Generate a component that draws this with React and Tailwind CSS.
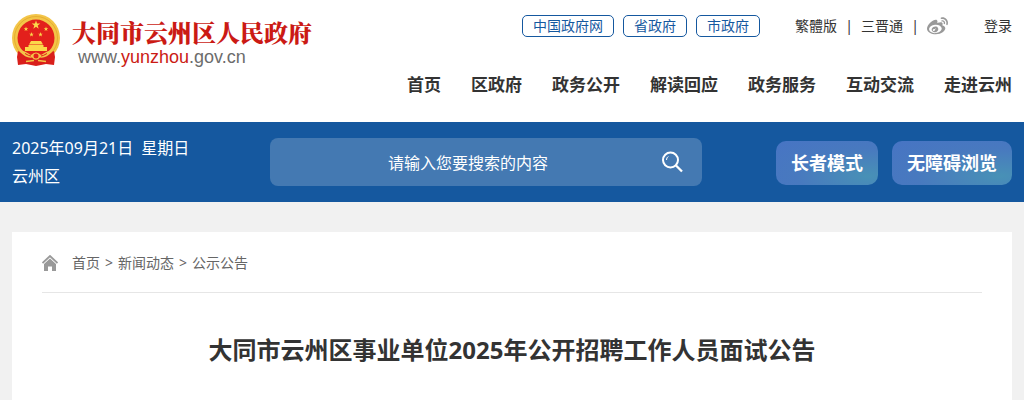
import React from "react";
import { FaWeibo } from "react-icons/fa";

const govLinks = ["中国政府网", "省政府", "市政府"];
const navItems = ["首页", "区政府", "政务公开", "解读回应", "政务服务", "互动交流", "走进云州"];
const crumbs = ["首页", "新闻动态", "公示公告"];

const STAR = "M0 -1L.24 -.32L.95 -.31L.38 .12L.59 .81L0 .4L-.59 .81L-.38 .12L-.95 -.31L-.24 -.32Z";

function Emblem() {
    return (
        <svg viewBox="0 0 48 52" className="w-12 h-[52px] shrink-0" aria-hidden="true">
            <circle cx="24" cy="24" r="24" fill="#f3c548" />
            <circle cx="24" cy="24" r="21.500" fill="none" stroke="#e5ae31" strokeWidth="1" />
            <circle cx="24" cy="24" r="18.500" fill="#e3201c" />
            <g fill="#fbd84a">
                <path d={STAR} transform="translate(24 11) scale(4.500)" />
                <path d={STAR} transform="translate(14 15) scale(2.400)" />
                <path d={STAR} transform="translate(34 15) scale(2.400)" />
                <path d={STAR} transform="translate(19.500 20.500) scale(2.400)" />
                <path d={STAR} transform="translate(28.500 20.500) scale(2.400)" />
                <path d="M19 27h10l2 3.500H17zM16.500 31h15v2h-15zM13 33h22v4H13z" />
            </g>
            <path d="M6 37L5 43L6 51L14 50L24 52L34 50L42 51L43 43L42 37Q33 42 24 42Q15 42 6 37Z" fill="#d91f1b" />
            <path d="M9 36Q15 38 19 41Q24 36 29 41Q33 38 39 36L40 38Q34 44.500 28 43.500Q24 48 20 43.500Q14 44.500 8 38Z" fill="#f3c548" />
            <path d="M13 39.500Q17 42 19 42M35 39.500Q31 42 29 42" stroke="#e3201c" strokeWidth="1" fill="none" />
            <circle cx="24" cy="42" r="2.500" fill="#e3201c" />
            <path d="M14 47.500L22 46.500M34 47.500L26 46.500" stroke="#f3c548" strokeWidth="1.500" fill="none" />
        </svg>
    );
}

function Logo() {
    return (
        <a href="#" className="flex gap-3 pt-[14px]">
            <Emblem />
            <div>
                <p className="text-[24px] leading-9 font-black text-[#cb1a14] whitespace-nowrap font-['Noto_Serif_CJK_SC','Noto_Sans_CJK_SC',serif]">大同市云州区人民政府</p>
                <p className="-mt-[5px] pl-[6px] text-[18px] leading-6 text-[#6c6c6c] font-['Liberation_Sans',sans-serif]">
                    www.<span className="text-[#cb1a14]">yunzhou</span>.gov.cn
                </p>
            </div>
        </a>
    );
}

function Header() {
    return (
        <header className="flex justify-between px-3 bg-white">
            <Logo />
            <div className="flex flex-col items-end pt-[15px]">
                <div className="flex items-center h-[22px] text-sm whitespace-nowrap">
                    <div className="flex gap-[9px] mr-[35px]">
                        {govLinks.map((name) => (
                            <a key={name} href="#" className="h-[22px] px-[10px] leading-5 border border-[#15589f] rounded-[5px] text-[#15589f]">
                                {name}
                            </a>
                        ))}
                    </div>
                    <a href="#">繁體版</a>
                    <span className="w-6 text-center">|</span>
                    <a href="#">三晋通</a>
                    <span className="w-6 text-center">|</span>
                    <a href="#" aria-label="微博" className="mr-9">
                        <FaWeibo size={21} color="#999999" />
                    </a>
                    <a href="#">登录</a>
                </div>
                <nav className="flex gap-[30px] h-[85px] pt-9 text-[17px] leading-6 font-bold whitespace-nowrap">
                    {navItems.map((item) => (
                        <a key={item} href="#">{item}</a>
                    ))}
                </nav>
            </div>
        </header>
    );
}

function ModeButton({ children }) {
    return (
        <button
            type="button"
            className="h-11 px-[15px] rounded-[10px] text-lg font-bold whitespace-nowrap bg-[radial-gradient(ellipse_at_90%_80%,#4891b6_0%,#4879bf_55%,#4774c4_100%)]"
        >
            {children}
        </button>
    );
}

function SearchBar() {
    return (
        <section className="flex items-center h-20 px-3 bg-[#15589f] text-white">
            <div className="w-[258px] shrink-0 leading-7">
                <p className="flex gap-2">
                    <span>2025年09月21日</span>
                    <span>星期日</span>
                </p>
                <p>云州区</p>
            </div>
            <form className="flex flex-1 h-12 rounded-lg bg-[#4479b2]" onSubmit={(e) => e.preventDefault()}>
                <input
                    type="text"
                    aria-label="搜索"
                    placeholder="请输入您要搜索的内容"
                    className="flex-1 min-w-0 pl-9 pt-[2px] text-center outline-none placeholder:text-white"
                />
                <button type="submit" aria-label="搜索" className="w-[72px] flex items-center pl-8">
                    <svg viewBox="0 0 22 22" className="w-[22px] h-[22px]" fill="none" stroke="#fff" strokeWidth="2">
                        <circle cx="8.500" cy="9" r="7.500" />
                        <path d="M14 14.500L20 20.500" strokeWidth="2.300" />
                        <path d="M4.500 9Q4.500 6.500 6.300 5.500" strokeWidth="1" />
                    </svg>
                </button>
            </form>
            <div className="flex gap-[14px] ml-[74px] pt-[2px]">
                <ModeButton>长者模式</ModeButton>
                <ModeButton>无障碍浏览</ModeButton>
            </div>
        </section>
    );
}

function Breadcrumb() {
    return (
        <div className="flex items-center h-[61px] pt-px border-b border-[#e6e6e6] text-sm text-[#666]">
            <svg viewBox="0 0 16 16" className="w-4 h-4 mr-[14px]" aria-hidden="true">
                <path d="M.5 8L8 1L15.500 8" fill="none" stroke="#999" strokeWidth="1.800" />
                <path d="M8 3.500L14 9V16H10V11.500H6V16H2V9Z" fill="#999" />
            </svg>
            {crumbs.map((name, i) => (
                <React.Fragment key={name}>
                    {i > 0 && <span className="px-[5px]">&gt;</span>}
                    <a href="#">{name}</a>
                </React.Fragment>
            ))}
        </div>
    );
}

export default function App() {
    return (
        <div className="min-h-screen bg-[#f1f1f1] text-[#333] font-['Noto_Sans','Noto_Sans_CJK_SC',sans-serif]">
            <Header />
            <SearchBar />
            <main className="mx-3 mt-[30px] px-[30px] pb-8 bg-white">
                <Breadcrumb />
                <h1 className="pt-[39px] text-2xl leading-9 font-bold text-center">大同市云州区事业单位2025年公开招聘工作人员面试公告</h1>
            </main>
        </div>
    );
}
